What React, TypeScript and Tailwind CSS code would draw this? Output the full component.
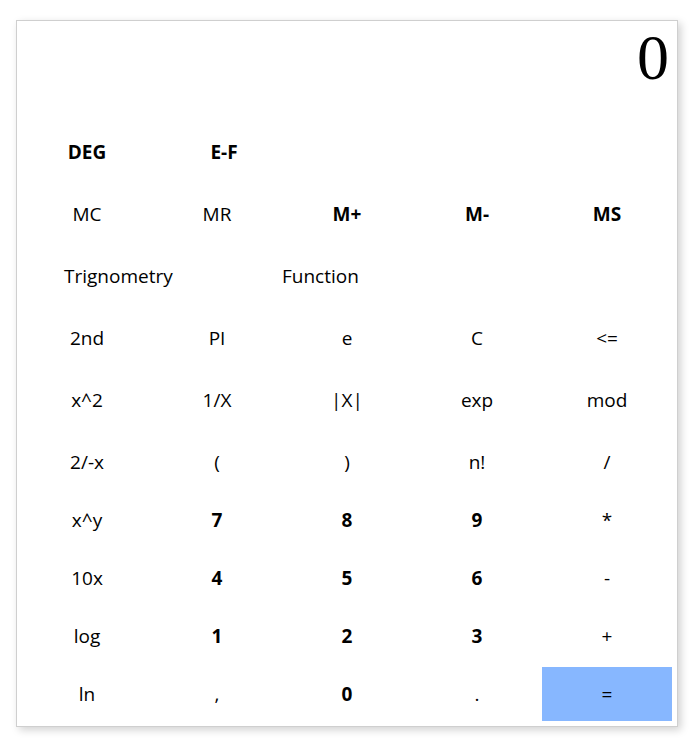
import React from 'react';

type K = { label: string; bold?: boolean; primary?: boolean };

const keys: K[][] = [
  [{ label: '2nd' }, { label: 'PI' }, { label: 'e' }, { label: 'C' }, { label: '<=' }],
  [{ label: 'x^2' }, { label: '1/X' }, { label: '|X|' }, { label: 'exp' }, { label: 'mod' }],
  [{ label: '2/-x' }, { label: '(' }, { label: ')' }, { label: 'n!' }, { label: '/' }],
];

const numKeys: K[][] = [
  [{ label: 'x^y' }, { label: '7', bold: true }, { label: '8', bold: true }, { label: '9', bold: true }, { label: '*' }],
  [{ label: '10x' }, { label: '4', bold: true }, { label: '5', bold: true }, { label: '6', bold: true }, { label: '-' }],
  [{ label: 'log' }, { label: '1', bold: true }, { label: '2', bold: true }, { label: '3', bold: true }, { label: '+' }],
  [{ label: 'ln' }, { label: ',' }, { label: '0', bold: true }, { label: '.' }, { label: '=', primary: true }],
];

const memory: K[] = [
  { label: 'MC' },
  { label: 'MR' },
  { label: 'M+', bold: true },
  { label: 'M-', bold: true },
  { label: 'MS', bold: true },
];

function Key({ label, bold, primary }: K) {
  return (
    <button
      className={`my-[2px] flex h-[54px] items-center justify-center text-[19px] text-black ${bold ? 'font-bold' : 'font-normal'} ${primary ? 'bg-[#87b7ff]' : 'bg-white'}`}
    >
      {label}
    </button>
  );
}

export default function App() {
  return (
    <div className="min-h-screen bg-white pl-[16px] pt-[20px]" style={{ fontFamily: '"Open Sans", "Noto Sans", sans-serif' }}>
      <div className="w-[662px] border border-[#cfcfcf] bg-white shadow-[3px_3px_8px_rgba(0,0,0,0.18)]">
        {/* Display */}
        <div className="flex h-[102px] items-start justify-end pr-[8px] pt-[5px]">
          <span className="text-[64px] leading-none text-black" style={{ fontFamily: '"Liberation Serif", serif' }}>0</span>
        </div>

        <div className="px-[5px] pb-[3px]">
          {/* Mode row */}
          <div className="mb-[4px] grid grid-cols-5">
            <button className="my-[2px] flex h-[54px] items-center justify-center text-[19px] font-bold">DEG</button>
            <button className="my-[2px] flex h-[54px] items-center justify-center pl-[14px] text-[19px] font-bold">E-F</button>
          </div>

          {/* Memory row */}
          <div className="mb-[4px] grid grid-cols-5">
            {memory.map((k) => (
              <Key key={k.label} {...k} />
            ))}
          </div>

          {/* Dropdowns */}
          <div className="mb-[4px] grid grid-cols-5">
            <button className="col-span-2 my-[2px] flex h-[54px] items-center pl-[42px] text-[19px]">Trignometry</button>
            <button className="col-span-2 my-[2px] flex h-[54px] items-center text-[19px]">Function</button>
          </div>

          {keys.map((row, i) => (
            <div key={i} className={`grid grid-cols-5 ${i < keys.length - 1 ? 'mb-[4px]' : ''}`}>
              {row.map((k) => (
                <Key key={k.label} {...k} />
              ))}
            </div>
          ))}

          {numKeys.map((row, i) => (
            <div key={i} className="grid grid-cols-5">
              {row.map((k) => (
                <Key key={k.label} {...k} />
              ))}
            </div>
          ))}
        </div>
      </div>
    </div>
  );
}
